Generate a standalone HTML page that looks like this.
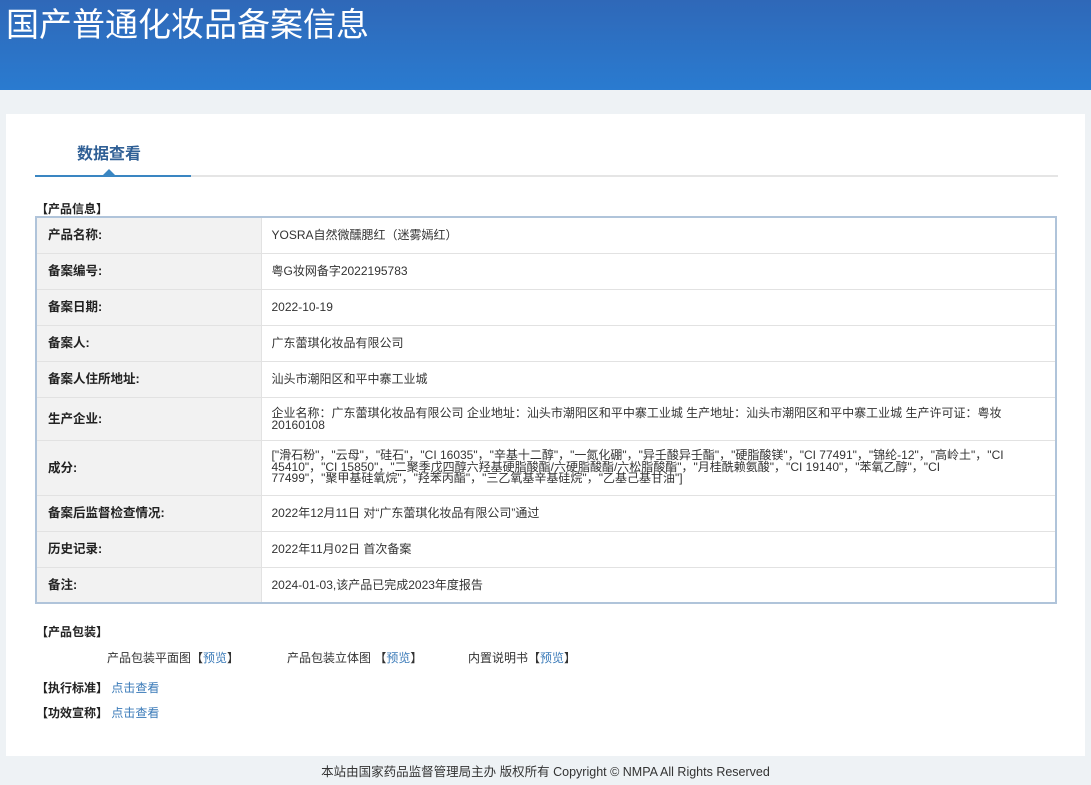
<!DOCTYPE html>
<html><head><meta charset="utf-8"><style>
*{margin:0;padding:0;box-sizing:border-box}
body{width:1091px;height:785px;overflow:hidden;background:#eef2f5;font-family:"Liberation Sans","Noto Sans CJK SC",sans-serif;font-size:12px;color:#333;position:relative}
.hdr{position:absolute;left:0;top:0;width:1091px;height:90px;background:linear-gradient(180deg,#2f68b8 0%,#2a7bd0 100%);overflow:hidden}
.hdr h1{position:absolute;left:6px;top:2px;font-size:33px;font-weight:normal;color:#fff;font-family:"Liberation Sans","Noto Sans CJK SC",sans-serif;line-height:46px}
.panel{position:absolute;left:6px;top:114px;width:1079px;height:642px;background:#fff}
.tab{position:absolute;left:77px;top:140px;font-size:16px;font-weight:bold;color:#2f5f95}
.tline{position:absolute;left:35px;top:175px;width:1023px;height:2px;background:#e5e5e5}
.tact{position:absolute;left:35px;top:175px;width:156px;height:2px;background:#3a86c2}
.tri{position:absolute;left:103px;top:169px;width:0;height:0;border-left:6px solid transparent;border-right:6px solid transparent;border-bottom:6px solid #3a86c2}
.sec{position:absolute;font-weight:bold;color:#222;font-size:12px}
table{position:absolute;left:35px;top:216px;width:1022px;border-collapse:collapse;border:2px solid #b0c4da}
td{border:1px solid #e2e2e2;padding:0 50px 0 10px;height:36px;vertical-align:middle;font-size:12px;line-height:12px}
td.l{width:225px;background:#f2f2f2;font-weight:bold;color:#222;font-size:12.5px;padding-left:11px}
a{color:#3a7ab8;text-decoration:none}
.foot{position:absolute;top:761px;left:0;width:1091px;text-align:center;font-size:12.5px;color:#333}
</style></head><body>
<div class="hdr"><h1>国产普通化妆品备案信息</h1></div>
<div class="panel"></div>
<div class="tab">数据查看</div>
<div class="tline"></div><div class="tact"></div><div class="tri"></div>
<div class="sec" style="left:36px;top:200px">【产品信息】</div>
<table>
<tr><td class="l">产品名称:</td><td>YOSRA自然微醺腮红（迷雾嫣红）</td></tr>
<tr><td class="l">备案编号:</td><td>粤G妆网备字2022195783</td></tr>
<tr><td class="l">备案日期:</td><td>2022-10-19</td></tr>
<tr><td class="l">备案人:</td><td>广东蕾琪化妆品有限公司</td></tr>
<tr><td class="l">备案人住所地址:</td><td>汕头市潮阳区和平中寨工业城</td></tr>
<tr><td class="l" style="height:43px">生产企业:</td><td>企业名称：广东蕾琪化妆品有限公司 企业地址：汕头市潮阳区和平中寨工业城 生产地址：汕头市潮阳区和平中寨工业城 生产许可证：粤妆20160108</td></tr>
<tr><td class="l" style="height:55px">成分:</td><td style="line-height:11.5px">["滑石粉"，"云母"，"硅石"，"CI 16035"，"辛基十二醇"，"一氮化硼"，"异壬酸异壬酯"，"硬脂酸镁"，"CI 77491"，"锦纶-12"，"高岭土"，"CI 45410"，"CI 15850"，"二聚季戊四醇六羟基硬脂酸酯/六硬脂酸酯/六松脂酸酯"，"月桂酰赖氨酸"，"CI 19140"，"苯氧乙醇"，"CI 77499"，"聚甲基硅氧烷"，"羟苯丙酯"，"三乙氧基辛基硅烷"，"乙基己基甘油"]</td></tr>
<tr><td class="l">备案后监督检查情况:</td><td>2022年12月11日 对“广东蕾琪化妆品有限公司”通过</td></tr>
<tr><td class="l">历史记录:</td><td>2022年11月02日 首次备案</td></tr>
<tr><td class="l">备注:</td><td>2024-01-03,该产品已完成2023年度报告</td></tr>
</table>
<div class="sec" style="left:36px;top:623px">【产品包装】</div>
<div style="position:absolute;left:107px;top:649px">产品包装平面图【<a>预览</a>】</div>
<div style="position:absolute;left:287px;top:649px">产品包装立体图 【<a>预览</a>】</div>
<div style="position:absolute;left:468px;top:649px">内置说明书【<a>预览</a>】</div>
<div class="sec" style="left:36px;top:679px">【执行标准】 <a style="font-weight:normal">点击查看</a></div>
<div class="sec" style="left:36px;top:704px">【功效宣称】 <a style="font-weight:normal">点击查看</a></div>
<div class="foot">本站由国家药品监督管理局主办 版权所有 Copyright © NMPA All Rights Reserved</div>
</body></html>
